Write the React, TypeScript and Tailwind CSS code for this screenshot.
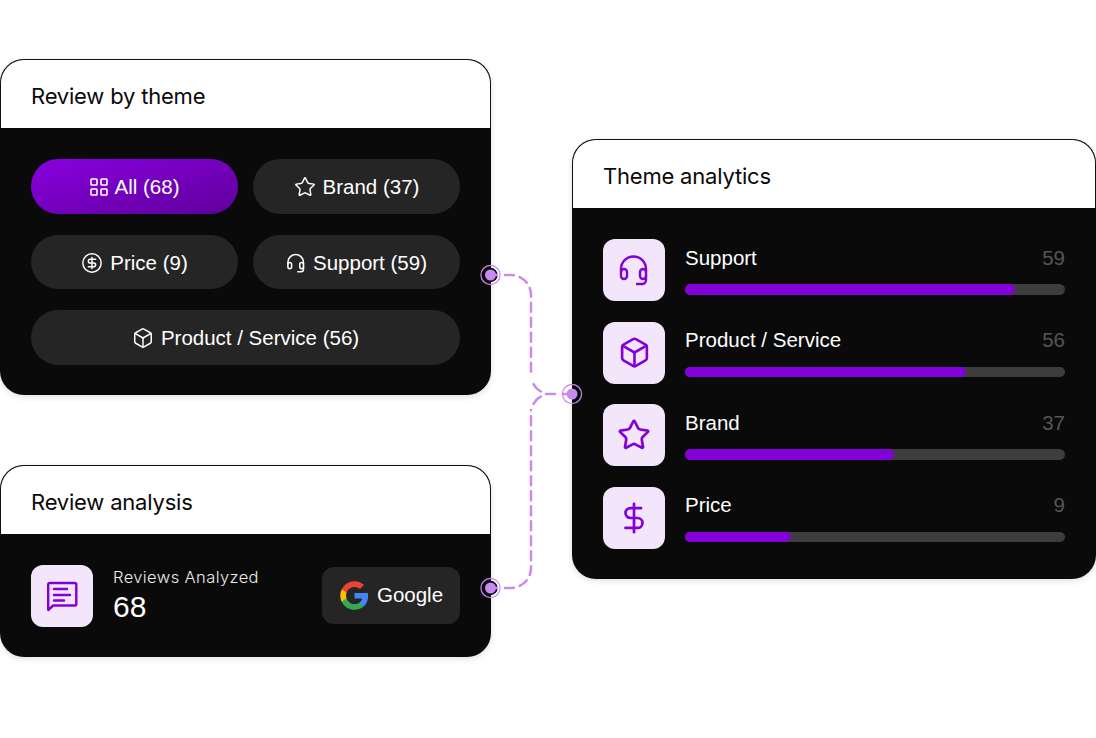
import { Box, CircleDollarSign, DollarSign, Star } from 'lucide-react';
import type { ReactNode } from 'react';

const HeadsetIcon = ({ className }: { className: string }) => (
    <svg viewBox="0 0 32 32" className={className} fill="none" stroke="currentColor" strokeWidth="2.4" strokeLinecap="round" strokeLinejoin="round">
        <path d="M3 21v-6a12.5 12.5 0 0 1 25 0v11a4 4 0 0 1-4 4h-5" />
        <path d="M3 18a3 3 0 0 1 6 0v4a3 3 0 0 1-6 0" />
        <path d="M28 18a3 3 0 0 0-6 0v4a3 3 0 0 0 6 0" />
    </svg>
);

const GridIcon = () => (
    <svg viewBox="0 0 18 18" className="w-[18px] h-[18px]" fill="none" stroke="currentColor" strokeWidth="1.6" strokeLinejoin="round">
        <rect x="1" y="1" width="6" height="6" rx="0.8" />
        <rect x="11" y="1" width="6" height="6" rx="0.8" />
        <rect x="1" y="11" width="6" height="6" rx="0.8" />
        <rect x="11" y="11" width="6" height="6" rx="0.8" />
    </svg>
);

const themeRows = [
    { label: 'Support', value: 59, fill: 330, icon: <HeadsetIcon className="w-8 h-8" /> },
    { label: 'Product / Service', value: 56, fill: 281, icon: <Box className="w-[33px] h-[33px]" strokeWidth={1.9} /> },
    { label: 'Brand', value: 37, fill: 209, icon: <Star className="w-[34px] h-[34px]" strokeWidth={1.9} /> },
    { label: 'Price', value: 9, fill: 106, icon: <DollarSign className="w-[34px] h-[34px]" strokeWidth={1.9} /> },
];

const Card = ({ title, children }: { title: string; children: ReactNode }) => (
    <div className="rounded-[24px] overflow-hidden bg-[#0a0a0a] shadow-[0_2px_6px_rgba(0,0,0,0.12)]">
        <div className="h-[69px] bg-white border border-b-0 border-[#111] rounded-t-[24px] pl-[30px] pt-[4px] flex items-center font-['Inter',sans-serif] text-[22px] tracking-[-0.2px] text-[#0a0a0a]">
            {title}
        </div>
        {children}
    </div>
);

const Pill = ({ icon, label, className }: { icon: ReactNode; label: string; className: string }) => (
    <div className={`h-[54.5px] pt-[2px] rounded-full flex items-center justify-center gap-[7px] text-[20.5px] text-white ${className}`}>
        {icon}
        <span className="pt-[1px]">{label}</span>
    </div>
);

const Node = ({ x, y, disc }: { x: number; y: number; disc?: boolean }) => (
    <g>
        {disc && <circle cx={x} cy={y} r="7.2" fill="#0a0a0a" />}
        <circle cx={x} cy={y} r="9.6" fill="none" stroke="#c98af0" strokeWidth="1.2" />
        <circle cx={x} cy={y} r="5.5" fill="#c98af0" />
    </g>
);

const MessageIcon = () => (
    <svg viewBox="0 0 32 32" className="w-8 h-8" fill="none" stroke="currentColor" strokeWidth="2.4" strokeLinecap="round" strokeLinejoin="round">
        <path d="M2.2 30V4.5A1.5 1.5 0 0 1 3.7 3h25.1a1.5 1.5 0 0 1 1.5 1.5v19.5a1.5 1.5 0 0 1-1.5 1.5H7.2Z" />
        <path d="M8 9h13M8 15h16M8 20.5h10" />
    </svg>
);

const GoogleLogo = () => (
    <svg viewBox="0 0 24 24" className="w-[31px] h-[31px]">
        <path fill="#4285F4" d="M22.56 12.25c0-.78-.07-1.53-.2-2.25H12v4.26h5.92c-.26 1.37-1.04 2.53-2.21 3.31v2.77h3.57c2.08-1.92 3.28-4.74 3.28-8.09z" />
        <path fill="#34A853" d="M12 23c2.97 0 5.46-.98 7.28-2.66l-3.57-2.77c-.98.66-2.23 1.06-3.71 1.06-2.86 0-5.29-1.93-6.16-4.53H2.18v2.84C3.99 20.53 7.7 23 12 23z" />
        <path fill="#FBBC05" d="M5.84 14.09c-.22-.66-.35-1.36-.35-2.09s.13-1.43.35-2.09V7.07H2.18C1.43 8.55 1 10.22 1 12s.43 3.45 1.18 4.93l2.85-2.22.81-.62z" />
        <path fill="#EA4335" d="M12 5.38c1.62 0 3.06.56 4.21 1.64l3.15-3.15C17.45 2.09 14.97 1 12 1 7.7 1 3.99 3.47 2.18 7.07l3.66 2.84c.87-2.6 3.3-4.53 6.16-4.53z" />
    </svg>
);

const App = () => {
    return (
        <div className="relative w-[1096px] h-[738px] bg-white overflow-hidden flex items-start gap-[81px] font-['Liberation_Sans',sans-serif]">
            <div className="w-[491px] pt-[59px] flex flex-col gap-[70px]">
                <Card title="Review by theme">
                    <div className="pt-[31px] px-[31px] pb-[30.5px] grid grid-cols-2 gap-x-[15px] gap-y-[21px]">
                        <Pill
                            className="bg-gradient-to-br from-[#8a00e0] to-[#5f009c]"
                            icon={<GridIcon />}
                            label="All (68)"
                        />
                        <Pill className="bg-[#252525]" icon={<Star className="w-[22px] h-[22px]" strokeWidth={1.6} />} label="Brand (37)" />
                        <Pill className="bg-[#252525]" icon={<CircleDollarSign className="w-[22px] h-[22px]" strokeWidth={1.6} />} label="Price (9)" />
                        <Pill className="bg-[#252525]" icon={<HeadsetIcon className="w-[20px] h-[20px]" />} label="Support (59)" />
                        <Pill className="bg-[#252525] col-span-2" icon={<Box className="w-[22px] h-[22px]" strokeWidth={1.6} />} label="Product / Service (56)" />
                    </div>
                </Card>

                <Card title="Review analysis">
                    <div className="h-[123px] px-[31px] flex items-center">
                        <div className="w-[62px] h-[62px] rounded-[12px] bg-[#f3e6fb] text-[#8400d9] flex items-center justify-center">
                            <MessageIcon />
                        </div>
                        <div className="ml-[20px] pt-[1px] text-white">
                            <div className="font-['Inter',sans-serif] font-light text-[16.5px] leading-[22px] text-[#ececec] tracking-[0.4px]">Reviews Analyzed</div>
                            <div className="text-[30px] leading-[38px]">68</div>
                        </div>
                        <div className="ml-auto w-[138px] h-[57px] rounded-[12px] bg-[#252525] flex items-center justify-center gap-[7px] text-[20.5px] text-white">
                            <GoogleLogo />
                            <span>Google</span>
                        </div>
                    </div>
                </Card>
            </div>

            <div className="w-[524px] mt-[139px]">
                <Card title="Theme analytics">
                    <div className="pt-[31px] px-[31px] pb-[30.5px] flex flex-col gap-[20.5px]">
                        {themeRows.map((row) => (
                            <div key={row.label} className="flex items-start gap-[20px]">
                                <div className="w-[62px] h-[62px] rounded-[12px] bg-[#f3e6fb] text-[#8400d9] flex items-center justify-center">
                                    {row.icon}
                                </div>
                                <div className="flex-1">
                                    <div className="flex justify-between items-center h-[38px] text-[20.5px]">
                                        <span className="text-white">{row.label}</span>
                                        <span className="text-[#555]">{row.value}</span>
                                    </div>
                                    <div className="h-[10.5px] mt-[7px] rounded-full bg-[#3d3d3d]">
                                        <div className="h-full rounded-full bg-[#8400d9]" style={{ width: row.fill }} />
                                    </div>
                                </div>
                            </div>
                        ))}
                    </div>
                </Card>
            </div>

            {/* connector lines between the cards */}
            <svg className="absolute inset-0 pointer-events-none" width="1096" height="738" fill="none">
                <Node x={490.5} y={275} disc />
                <Node x={490.5} y={588} disc />
                <Node x={572} y={394} />
                <g stroke="#c98af0" strokeWidth="2.5" strokeLinecap="round">
                    <path strokeDasharray="9 6" d="M505 275H511a20 20 0 0 1 20 20V377" />
                    <path strokeDasharray="9 6" d="M505 588H511a20 20 0 0 0 20-20V410" />
                    <path d="M490.5 275H497M490.5 588H497M533.5 384Q536 389 541 391.5M533.5 404Q536 399 541 396.5M546 394H555M563 394H572" />
                </g>
            </svg>
        </div>
    );
};

export default App;
